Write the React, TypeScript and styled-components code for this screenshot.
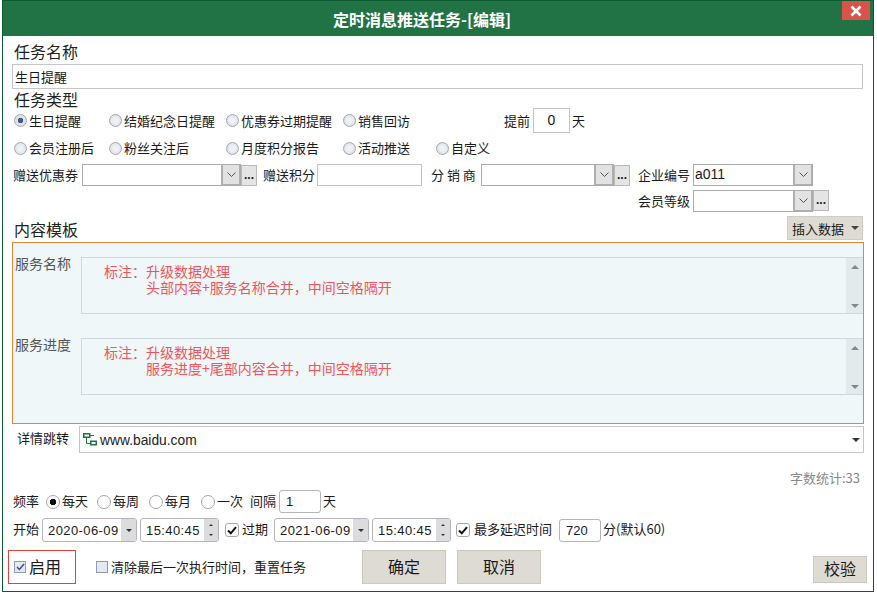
import React from 'react';
import styled, { createGlobalStyle } from 'styled-components';

const GlobalStyle = createGlobalStyle`
  html, body {
    margin: 0;
    padding: 0;
    background: #fff;
  }
  body {
    font-family: "Noto Sans CJK SC", "Liberation Sans", sans-serif;
    font-size: 13px;
    color: #1a1a1a;
  }
  * {
    box-sizing: border-box;
  }
`;

const FONT_LATIN = `"Liberation Sans", "Noto Sans CJK SC", sans-serif`;

function App() {
  return (
    <>
      <GlobalStyle />
      <Page>
        <Dialog>
          <TitleBar>
            定时消息推送任务-[编辑]
            <CloseButton>
              <svg width="12" height="12" viewBox="0 0 12 12">
                <path d="M1.5 1.5 L10.5 10.5 M10.5 1.5 L1.5 10.5" stroke="#fff" strokeWidth="2.6" />
              </svg>
            </CloseButton>
          </TitleBar>
          <Form>
            <SectionLabel $top={7}>任务名称</SectionLabel>
            <NameInput>生日提醒</NameInput>
            <SectionLabel $top={2} $h={17}>任务类型</SectionLabel>

            <Row $h={25}>
              <TypeRadio $w={95} checked>生日提醒</TypeRadio>
              <TypeRadio $w={117}>结婚纪念日提醒</TypeRadio>
              <TypeRadio $w={117}>优惠券过期提醒</TypeRadio>
              <TypeRadio $w={163}>销售回访</TypeRadio>
              <Text>提前</Text>
              <SmallInput $ml={3} $w={37} $h={25} $center>0</SmallInput>
              <Text $ml={2}>天</Text>
            </Row>
            <Row $h={24} $top={3}>
              <TypeRadio $w={95}>会员注册后</TypeRadio>
              <TypeRadio $w={117}>粉丝关注后</TypeRadio>
              <TypeRadio $w={117}>月度积分报告</TypeRadio>
              <TypeRadio $w={93}>活动推送</TypeRadio>
              <TypeRadio $w={70}>自定义</TypeRadio>
            </Row>
            <Row $h={22} $top={4}>
              <Text $ml={1}>赠送优惠券</Text>
              <Combo $ml={4} $w={159} />
              <More />
              <Text $ml={6}>赠送积分</Text>
              <SmallInput $ml={2} $w={105} $h={22} />
              <Text $ml={9} $w={46}>分 销 商</Text>
              <Combo $ml={4} $w={133} />
              <More />
              <Text $ml={8}>企业编号</Text>
              <Combo $ml={3} $w={120}>a011</Combo>
            </Row>
            <Row $h={23} $top={3} $pl={626}>
              <Text>会员等级</Text>
              <Combo $ml={3} $w={120} />
              <More />
            </Row>

            <TemplateHead>
              <SectionLabel $top={4}>内容模板</SectionLabel>
              <InsertButton>
                插入数据
                <Caret $color="#444" />
              </InsertButton>
            </TemplateHead>
            <TemplatePanel>
              <TemplateRow>
                <TemplateLabel>服务名称</TemplateLabel>
                <TemplateBox>
                  <Note>
                    <div>标注：升级数据处理</div>
                    <NoteLine>头部内容+服务名称合并，中间空格隔开</NoteLine>
                  </Note>
                  <ScrollBar>
                    <CaretUp />
                    <Caret $color="#7d8a8e" />
                  </ScrollBar>
                </TemplateBox>
              </TemplateRow>
              <TemplateRow>
                <TemplateLabel>服务进度</TemplateLabel>
                <TemplateBox>
                  <Note>
                    <div>标注：升级数据处理</div>
                    <NoteLine>服务进度+尾部内容合并，中间空格隔开</NoteLine>
                  </Note>
                  <ScrollBar>
                    <CaretUp />
                    <Caret $color="#7d8a8e" />
                  </ScrollBar>
                </TemplateBox>
              </TemplateRow>
            </TemplatePanel>

            <Row $h={27} $top={2} $lift={5}>
              <Text $ml={5}>详情跳转</Text>
              <LinkSelect>
                <svg width="14" height="13" viewBox="0 0 14 13">
                  <path d="M7 2.5 H11 M3.5 5 V10.5 H7" fill="none" stroke="#217346" strokeWidth="1" />
                  <rect x="0.75" y="0.75" width="6" height="3.5" fill="#fff" stroke="#217346" strokeWidth="1.5" />
                  <rect x="7.75" y="8.25" width="5.5" height="3.5" fill="#fff" stroke="#217346" strokeWidth="1.5" />
                </svg>
                <LinkText>www.baidu.com</LinkText>
                <Caret $color="#333" />
              </LinkSelect>
            </Row>

            <WordCount>字数统计:33</WordCount>

            <Row $h={23} $top={5} $lift={3}>
              <Text $ml={1}>频率</Text>
              <FreqRadio $ml={7} $w={51} checked>每天</FreqRadio>
              <FreqRadio $w={52}>每周</FreqRadio>
              <FreqRadio $w={52}>每月</FreqRadio>
              <FreqRadio $w={49}>一次</FreqRadio>
              <Text>间隔</Text>
              <RoundInput $ml={3} $w={42}>1</RoundInput>
              <Text $ml={2}>天</Text>
            </Row>
            <Row $h={24} $top={5} $lift={3}>
              <Text $ml={1}>开始</Text>
              <DateField $ml={3}>2020-06-09</DateField>
              <TimeField $ml={3}>15:40:45</TimeField>
              <Check $ml={6} />
              <Text $ml={3}>过期</Text>
              <DateField $ml={6}>2021-06-09</DateField>
              <TimeField $ml={3}>15:40:45</TimeField>
              <Check $ml={5} />
              <Text $ml={4}>最多延迟时间</Text>
              <RoundInput $ml={7} $w={42}>720</RoundInput>
              <Text $ml={2}>分(默认60)</Text>
            </Row>

            <BottomRow>
              <EnableBox>
                <FlatCheck checked />
                <BottomText>启用</BottomText>
              </EnableBox>
              <ResetOption>
                <FlatCheck />
                <Text>清除最后一次执行时间，重置任务</Text>
              </ResetOption>
              <ActionButton $ml={36}>确定</ActionButton>
              <ActionButton $ml={11}>取消</ActionButton>
              <VerifyButton>校验</VerifyButton>
            </BottomRow>
          </Form>
        </Dialog>
      </Page>
    </>
  );
}

function TypeRadio({ $w, checked, children }: { $w: number; checked?: boolean; children: React.ReactNode }) {
  return (
    <RadioCell $w={$w}>
      <RadioDot $checked={checked} />
      <Text>{children}</Text>
    </RadioCell>
  );
}

function FreqRadio({ $w, $ml, checked, children }: { $w: number; $ml?: number; checked?: boolean; children: React.ReactNode }) {
  return (
    <RadioCell $w={$w} $ml={$ml}>
      <PlainRadio $checked={checked} />
      <Text>{children}</Text>
    </RadioCell>
  );
}

function Combo({ $ml, $w, children }: { $ml?: number; $w: number; children?: React.ReactNode }) {
  return (
    <ComboBox $ml={$ml} $w={$w}>
      <ComboText>{children}</ComboText>
      <ComboArrow>
        <svg width="9" height="5" viewBox="0 0 9 5">
          <path d="M0.5 0.5 L4.5 4.5 L8.5 0.5" fill="none" stroke="#555" strokeWidth="1" />
        </svg>
      </ComboArrow>
    </ComboBox>
  );
}

function More() {
  return <MoreButton>...</MoreButton>;
}

function DateField({ $ml, children }: { $ml?: number; children: React.ReactNode }) {
  return (
    <Spinner $ml={$ml} $w={95}>
      <SpinnerText>{children}</SpinnerText>
      <SpinnerSide $w={15}>
        <Caret $color="#333" $size={3} />
      </SpinnerSide>
    </Spinner>
  );
}

function TimeField({ $ml, children }: { $ml?: number; children: React.ReactNode }) {
  return (
    <Spinner $ml={$ml} $w={79}>
      <SpinnerText>{children}</SpinnerText>
      <SpinnerSide $w={14} $stack>
        <CaretUp $color="#333" $size={2.5} />
        <Caret $color="#333" $size={2.5} />
      </SpinnerSide>
    </Spinner>
  );
}

function Check({ $ml }: { $ml?: number }) {
  return (
    <CheckBox $ml={$ml}>
      <svg width="10" height="9" viewBox="0 0 10 9">
        <path d="M1 4.5 L3.8 7.3 L9 1.2" fill="none" stroke="#111" strokeWidth="2" />
      </svg>
    </CheckBox>
  );
}

function FlatCheck({ checked }: { checked?: boolean }) {
  return (
    <FlatCheckBox>
      {checked && (
        <svg width="9" height="8" viewBox="0 0 9 8">
          <path d="M1 4 L3.4 6.5 L8 1" fill="none" stroke="#3d4f80" strokeWidth="1.5" />
        </svg>
      )}
    </FlatCheckBox>
  );
}

const Page = styled.div`
  width: 877px;
  height: 595px;
  padding-left: 2px;
  overflow: hidden;
`;

const Dialog = styled.div`
  width: 872px;
  height: 592px;
  border: 1px solid #0b5a30;
  background: #fff;
`;

const TitleBar = styled.div`
  position: relative;
  height: 35px;
  padding-right: 32px;
  background: #217346;
  color: #fff;
  font-size: 16px;
  font-weight: 700;
  line-height: 37px;
  text-align: center;
`;

const CloseButton = styled.div`
  position: absolute;
  top: 0;
  right: 3px;
  width: 28px;
  height: 19px;
  background: #d9534a;
  display: flex;
  align-items: center;
  justify-content: center;
`;

const Form = styled.div`
  padding: 0 9px;
`;

const SectionLabel = styled.div<{ $top?: number; $h?: number }>`
  margin-top: ${(p) => p.$top ?? 0}px;
  height: ${(p) => p.$h ?? 18}px;
  padding-left: 2px;
  font-size: 16px;
  line-height: 16px;
  color: #222;
`;

const NameInput = styled.div`
  margin-top: 3px;
  width: 851px;
  height: 25px;
  border: 1px solid #c6c6c6;
  padding-left: 2px;
  line-height: 24px;
`;

const Row = styled.div<{ $h: number; $top?: number; $pl?: number; $lift?: number }>`
  --text-lift: ${(p) => p.$lift ?? 1}px;
  display: flex;
  align-items: center;
  height: ${(p) => p.$h}px;
  margin-top: ${(p) => p.$top ?? 0}px;
  padding-left: ${(p) => p.$pl ?? 0}px;
`;

const Text = styled.span<{ $ml?: number; $w?: number }>`
  flex: none;
  margin-left: ${(p) => p.$ml ?? 0}px;
  width: ${(p) => (p.$w ? `${p.$w}px` : 'auto')};
  padding-bottom: var(--text-lift, 1px);
  white-space: nowrap;
`;

const RadioCell = styled.div<{ $w: number; $ml?: number }>`
  display: flex;
  align-items: center;
  gap: 2px;
  flex: none;
  width: ${(p) => p.$w}px;
  margin-left: ${(p) => p.$ml ?? 0}px;
  white-space: nowrap;
`;

const RadioDot = styled.span<{ $checked?: boolean }>`
  flex: none;
  width: 13px;
  height: 13px;
  margin-left: 2px;
  border-radius: 50%;
  border: 1px solid #a4a9b1;
  background: ${(p) =>
    p.$checked
      ? 'radial-gradient(circle, #3d5a8f 0 2.5px, #dfe3e8 3px 100%)'
      : 'radial-gradient(circle, #eef1f5 0 2.5px, #d3d7dd 100%)'};
`;

const PlainRadio = styled.span<{ $checked?: boolean }>`
  flex: none;
  width: 14px;
  height: 14px;
  border-radius: 50%;
  border: 1px solid #a6a6a6;
  background: ${(p) => (p.$checked ? 'radial-gradient(circle, #111 0 3px, #fff 3.5px 100%)' : '#fff')};
`;

const SmallInput = styled.div<{ $ml?: number; $w: number; $h: number; $center?: boolean }>`
  flex: none;
  margin-left: ${(p) => p.$ml ?? 0}px;
  width: ${(p) => p.$w}px;
  height: ${(p) => p.$h}px;
  border: 1px solid #c4c4c4;
  font-family: ${FONT_LATIN};
  font-size: 14px;
  line-height: ${(p) => p.$h - 2}px;
  text-align: ${(p) => (p.$center ? 'center' : 'left')};
`;

const ComboBox = styled.div<{ $ml?: number; $w: number }>`
  display: flex;
  flex: none;
  margin-left: ${(p) => p.$ml ?? 0}px;
  width: ${(p) => p.$w}px;
  height: 22px;
  border: 1px solid #ababab;
  background: #fff;
`;

const ComboText = styled.div`
  flex: 1;
  padding-left: 1px;
  font-family: ${FONT_LATIN};
  font-size: 14px;
  line-height: 18px;
`;

const ComboArrow = styled.div`
  display: flex;
  align-items: center;
  justify-content: center;
  width: 19px;
  background: #e2e2e2;
  border-left: 2px solid #b0b0b0;
  border-right: 1px solid #b0b0b0;
  border-bottom: 1px solid #b0b0b0;
`;

const MoreButton = styled.div`
  flex: none;
  width: 16px;
  height: 21px;
  background: #e4e4e4;
  border: 1px solid #b9b9b9;
  font-family: ${FONT_LATIN};
  font-size: 12px;
  font-weight: 700;
  line-height: 19px;
  text-align: center;
`;

const TemplateHead = styled.div`
  display: flex;
  align-items: center;
  justify-content: space-between;
  width: 851px;
  height: 24px;
  margin-top: 4px;
`;

const InsertButton = styled.div`
  display: flex;
  align-items: center;
  gap: 7px;
  width: 76px;
  height: 24px;
  padding-left: 4px;
  background: #dedbd2;
  border: 1px solid #d0cdc3;
`;

const TemplatePanel = styled.div`
  height: 182px;
  margin-top: 2px;
  padding: 14px 0 0 2px;
  background: #eff7f9;
  border: 1px solid #e5853a;
`;

const TemplateRow = styled.div`
  display: flex;
  height: 57px;
  margin-bottom: 24px;
`;

const TemplateLabel = styled.div`
  flex: none;
  width: 66px;
  color: #555;
  font-size: 14px;
  line-height: 13px;
`;

const TemplateBox = styled.div`
  display: flex;
  flex: 1;
  border: 1px solid #cfd8dc;
  border-right: none;
`;

const Note = styled.div`
  flex: 1;
  padding: 5px 0 0 22px;
  color: #f2545b;
  font-size: 14px;
  line-height: 16px;
`;

const NoteLine = styled.div`
  padding-left: 42px;
`;

const ScrollBar = styled.div`
  display: flex;
  flex-direction: column;
  align-items: center;
  justify-content: space-between;
  width: 17px;
  padding: 7px 0 5px;
  background: #e3eaec;
`;

const Caret = styled.span<{ $color: string; $size?: number }>`
  flex: none;
  width: 0;
  height: 0;
  border-left: ${(p) => p.$size ?? 4}px solid transparent;
  border-right: ${(p) => p.$size ?? 4}px solid transparent;
  border-top: ${(p) => p.$size ?? 4}px solid ${(p) => p.$color};
`;

const CaretUp = styled.span<{ $color?: string; $size?: number }>`
  flex: none;
  width: 0;
  height: 0;
  border-left: ${(p) => p.$size ?? 4}px solid transparent;
  border-right: ${(p) => p.$size ?? 4}px solid transparent;
  border-bottom: ${(p) => p.$size ?? 4}px solid ${(p) => p.$color ?? '#7d8a8e'};
`;

const LinkSelect = styled.div`
  display: flex;
  align-items: center;
  gap: 3px;
  width: 785px;
  height: 27px;
  margin-left: 10px;
  padding: 0 3px 0 3px;
  border: 1px solid #c6c6c6;
`;

const LinkText = styled.span`
  flex: 1;
  padding-top: 2px;
  font-family: ${FONT_LATIN};
  font-size: 13.8px;
  color: #222;
`;

const WordCount = styled.div`
  height: 15px;
  margin-top: 17px;
  padding-right: 4px;
  color: #888;
  line-height: 15px;
  text-align: right;
`;

const RoundInput = styled.div<{ $ml?: number; $w: number }>`
  flex: none;
  margin-left: ${(p) => p.$ml ?? 0}px;
  width: ${(p) => p.$w}px;
  height: 23px;
  padding-left: 6px;
  border: 1px solid #b4b4bc;
  border-radius: 3px;
  font-family: ${FONT_LATIN};
  line-height: 22px;
`;

const Spinner = styled.div<{ $ml?: number; $w: number }>`
  display: flex;
  flex: none;
  margin-left: ${(p) => p.$ml ?? 0}px;
  width: ${(p) => p.$w}px;
  height: 24px;
  border: 1px solid #b4b4bc;
  border-radius: 3px;
  overflow: hidden;
`;

const SpinnerText = styled.div`
  flex: 1;
  padding-left: 5px;
  font-family: ${FONT_LATIN};
  letter-spacing: 0.4px;
  line-height: 23px;
  white-space: nowrap;
`;

const SpinnerSide = styled.div<{ $w: number; $stack?: boolean }>`
  display: flex;
  flex: none;
  flex-direction: ${(p) => (p.$stack ? 'column' : 'row')};
  align-items: center;
  justify-content: ${(p) => (p.$stack ? 'space-between' : 'center')};
  width: ${(p) => p.$w}px;
  padding: ${(p) => (p.$stack ? '5px 0' : '0')};
  background: #dcdcdf;
`;

const CheckBox = styled.span<{ $ml?: number }>`
  display: flex;
  align-items: center;
  justify-content: center;
  flex: none;
  margin-left: ${(p) => p.$ml ?? 0}px;
  width: 14px;
  height: 14px;
  border: 1px solid #a9a9a9;
  border-radius: 3px;
  background: #fff;
`;

const BottomRow = styled.div`
  display: flex;
  align-items: center;
  height: 34px;
  margin-top: 8px;
`;

const EnableBox = styled.div`
  display: flex;
  flex: none;
  align-items: center;
  gap: 3px;
  width: 68px;
  height: 34px;
  margin-left: -4px;
  padding-left: 5px;
  border: 1px solid #e5403c;
  font-size: 16px;
`;

const BottomText = styled.span`
  padding-bottom: 2px;
`;

const ResetOption = styled.div`
  display: flex;
  flex: none;
  align-items: center;
  gap: 3px;
  width: 230px;
  margin-left: 20px;
  white-space: nowrap;
`;

const FlatCheckBox = styled.span`
  display: flex;
  align-items: center;
  justify-content: center;
  flex: none;
  width: 12px;
  height: 12px;
  border: 1px solid #8f9cb3;
  background: #e4e8ef;
`;

const ActionButton = styled.div<{ $ml: number }>`
  flex: none;
  margin-left: ${(p) => p.$ml}px;
  width: 84px;
  height: 34px;
  background: #dedbd4;
  border: 1px solid #cbc8bd;
  font-size: 16px;
  line-height: 30px;
  text-align: center;
`;

const VerifyButton = styled.div`
  flex: none;
  margin: 4px -3px 0 auto;
  width: 54px;
  height: 27px;
  background: #dedbd4;
  border: 1px solid #cbc8bd;
  font-size: 16px;
  line-height: 23px;
  text-align: center;
`;

export default App;
